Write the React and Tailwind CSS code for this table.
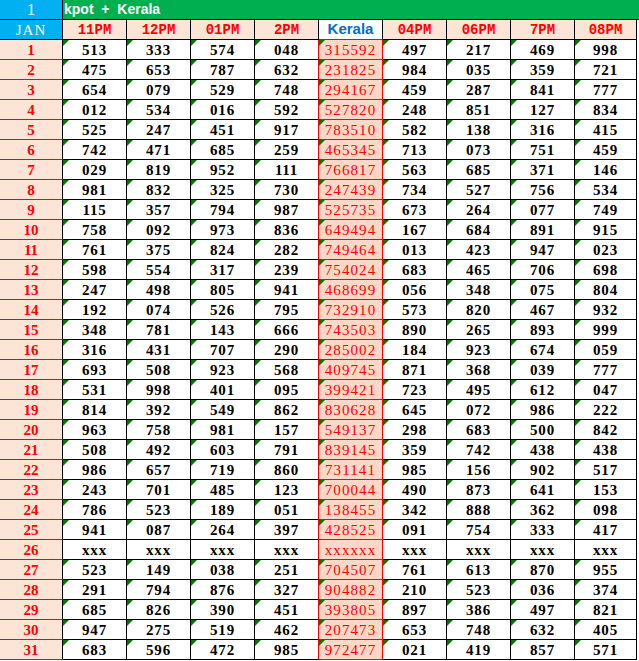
import React from 'react';

const cols = ['11PM', '12PM', '01PM', '2PM', 'Kerala', '04PM', '06PM', '7PM', '08PM'];

const rows = [
  '513 333 574 048 315592 497 217 469 998',
  '475 653 787 632 231825 984 035 359 721',
  '654 079 529 748 294167 459 287 841 777',
  '012 534 016 592 527820 248 851 127 834',
  '525 247 451 917 783510 582 138 316 415',
  '742 471 685 259 465345 713 073 751 459',
  '029 819 952 111 766817 563 685 371 146',
  '981 832 325 730 247439 734 527 756 534',
  '115 357 794 987 525735 673 264 077 749',
  '758 092 973 836 649494 167 684 891 915',
  '761 375 824 282 749464 013 423 947 023',
  '598 554 317 239 754024 683 465 706 698',
  '247 498 805 941 468699 056 348 075 804',
  '192 074 526 795 732910 573 820 467 932',
  '348 781 143 666 743503 890 265 893 999',
  '316 431 707 290 285002 184 923 674 059',
  '693 508 923 568 409745 871 368 039 777',
  '531 998 401 095 399421 723 495 612 047',
  '814 392 549 862 830628 645 072 986 222',
  '963 758 981 157 549137 298 683 500 842',
  '508 492 603 791 839145 359 742 438 438',
  '986 657 719 860 731141 985 156 902 517',
  '243 701 485 123 700044 490 873 641 153',
  '786 523 189 051 138455 342 888 362 098',
  '941 087 264 397 428525 091 754 333 417',
  'xxx xxx xxx xxx xxxxxx xxx xxx xxx xxx',
  '523 149 038 251 704507 761 613 870 955',
  '291 794 876 327 904882 210 523 036 374',
  '685 826 390 451 393805 897 386 497 821',
  '947 275 519 462 207473 653 748 632 405',
  '683 596 472 985 972477 021 419 857 571',
].map((r) => r.split(' '));

// little green "number stored as text" corner
function Flag() {
  return (
    <span className="absolute left-0 top-0 w-[6px] h-[6px] bg-[#007a00] [clip-path:polygon(0_0,100%_0,0_100%)]" />
  );
}

function DataCell({ value, col }) {
  const kerala = col === 4;
  const beforeKerala = col === 3;
  const flag = !value.startsWith('x');
  let cls = "relative h-[20px] flex items-center justify-center pt-[2px] border-r border-b text-[15px] font-['Liberation_Serif',serif] ";
  if (kerala) {
    cls += 'bg-[#fcd8c8] text-[#ff0000] border-[#ff0000] tracking-[1.1px]';
  } else {
    cls += 'bg-white text-black font-bold border-b-black tracking-[0.8px] ';
    cls += beforeKerala ? 'border-r-[#ff0000]' : 'border-r-black';
  }
  return (
    <div className={cls}>
      {flag && <Flag />}
      {value}
    </div>
  );
}

export default function App() {
  return (
    <div className="w-[639px] bg-white">
      <div className="flex h-[20px] border-b border-black">
        <div className="w-[63px] bg-[#00b0f0] border-r border-black flex items-center justify-center text-white text-[17px] font-['Liberation_Serif',serif]">
          1
        </div>
        <div className="flex-1 bg-[#00b050] flex items-center">
          <span className="ml-[1px] whitespace-pre text-white font-bold text-[14px] font-['Liberation_Sans',Arial,sans-serif]">
            kpot  +  Kerala
          </span>
        </div>
      </div>
      <div className="grid grid-cols-[63px_repeat(8,64px)_62px]">
        <div className="h-[20px] bg-[#00b0f0] border-r border-b border-black flex items-center justify-center pt-[1px] text-white text-[15px] tracking-[1px] font-['Liberation_Serif',serif]">
          JAN
        </div>
        {cols.map((c, i) =>
          i === 4 ? (
            <div
              key={c}
              className="h-[20px] bg-white border-r border-r-black border-b border-b-[#ff0000] flex items-center justify-center text-[#0070c0] font-bold text-[15px] font-['Liberation_Sans',Arial,sans-serif]"
            >
              {c}
            </div>
          ) : (
            <div
              key={c}
              className="h-[20px] bg-[#fce4d6] border-r border-b border-black flex items-center justify-center text-[#ff0000] font-bold text-[14px] pt-[1px] font-['Liberation_Mono',monospace]"
            >
              {c}
            </div>
          )
        )}
        {rows.map((r, ri) => (
          <React.Fragment key={ri}>
            <div className="h-[20px] bg-[#fce4d6] border-r border-r-black border-b border-b-[#ff0000] flex items-center justify-center pt-[2px] text-[#ff0000] font-bold text-[15px] font-['Liberation_Serif',serif]">
              {ri + 1}
            </div>
            {r.map((v, ci) => (
              <DataCell key={ci} value={v} col={ci} />
            ))}
          </React.Fragment>
        ))}
      </div>
    </div>
  );
}
